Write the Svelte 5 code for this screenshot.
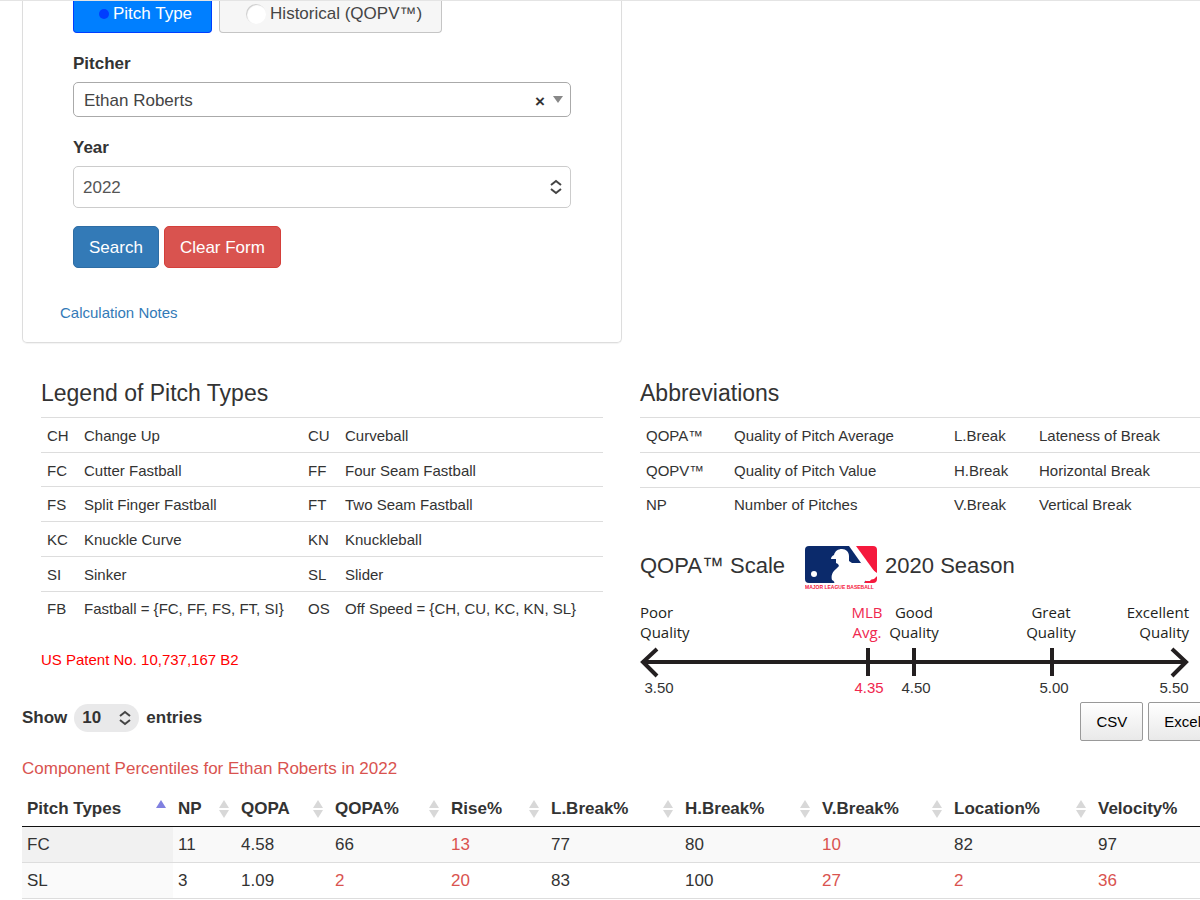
<script>
	let mode = $state("type");
	let pitcher = $state("Ethan Roberts");
	let year = $state("2022");
	let entries = $state("10");

	const legend = [
		["CH", "Change Up", "CU", "Curveball"],
		["FC", "Cutter Fastball", "FF", "Four Seam Fastball"],
		["FS", "Split Finger Fastball", "FT", "Two Seam Fastball"],
		["KC", "Knuckle Curve", "KN", "Knuckleball"],
		["SI", "Sinker", "SL", "Slider"],
		["FB", "Fastball = {FC, FF, FS, FT, SI}", "OS", "Off Speed = {CH, CU, KC, KN, SL}"],
	];

	const abbreviations = [
		["QOPA™", "Quality of Pitch Average", "L.Break", "Lateness of Break"],
		["QOPV™", "Quality of Pitch Value", "H.Break", "Horizontal Break"],
		["NP", "Number of Pitches", "V.Break", "Vertical Break"],
	];

	const columns = [
		{ name: "Pitch Types", width: 151 },
		{ name: "NP", width: 63 },
		{ name: "QOPA", width: 94 },
		{ name: "QOPA%", width: 116 },
		{ name: "Rise%", width: 100 },
		{ name: "L.Break%", width: 134 },
		{ name: "H.Break%", width: 137 },
		{ name: "V.Break%", width: 132 },
		{ name: "Location%", width: 144 },
		{ name: "Velocity%", width: 129 },
	];
	const total = columns.reduce((sum, c) => sum + c.width, 0);

	const rows = [
		["FC", 11, "4.58", 66, 13, 77, 80, 10, 82, 97],
		["SL", 3, "1.09", 2, 20, 83, 100, 27, 2, 36],
	];

	// percentiles start at the fourth column
	const isLow = (value, i) => i > 2 && value < 50;

	function clearForm() {
		mode = "type";
		pitcher = "";
		year = "2022";
	}
</script>

{#snippet chevrons()}
	<svg class="chevrons" viewBox="0 0 14 16" aria-hidden="true">
		<path d="M2 6 7 2l5 4M2 10l5 4 5-4" />
	</svg>
{/snippet}

<main>
	<div class="content">
		<form class="panel" onsubmit={(e) => e.preventDefault()}>
			<div class="modes">
				<label class:active={mode === "type"}>
					<input type="radio" name="mode" value="type" bind:group={mode} />
					Pitch Type
				</label>
				<label class:active={mode === "historical"}>
					<input type="radio" name="mode" value="historical" bind:group={mode} />
					Historical (QOPV™)
				</label>
			</div>

			<label class="title" for="pitcher">Pitcher</label>
			<div class="field pitcher">
				<select id="pitcher" bind:value={pitcher}>
					<option value=""></option>
					<option>Ethan Roberts</option>
				</select>
				<button type="button" class="remove" aria-label="Remove pitcher" onclick={() => (pitcher = "")}>×</button>
				<span class="arrow"></span>
			</div>

			<label class="title" for="year">Year</label>
			<div class="field year">
				<select id="year" bind:value={year}>
					<option>2022</option>
					<option>2021</option>
					<option>2020</option>
				</select>
				{@render chevrons()}
			</div>

			<div class="actions">
				<button class="btn primary">Search</button>
				<button class="btn danger" type="button" onclick={clearForm}>Clear Form</button>
			</div>

			<a class="notes" href="#notes">Calculation Notes</a>
		</form>

		<div class="columns">
			<section>
				<h3>Legend of Pitch Types</h3>
				<table class="info legend">
					<colgroup><col class="code" /><col class="name" /><col class="code" /><col /></colgroup>
					<tbody>
						{#each legend as row}
							<tr>{#each row as cell}<td>{cell}</td>{/each}</tr>
						{/each}
					</tbody>
				</table>
				<p class="patent">US Patent No. 10,737,167 B2</p>
			</section>

			<section>
				<h3>Abbreviations</h3>
				<table class="info abbr">
					<colgroup><col class="key" /><col class="name" /><col class="break" /><col /></colgroup>
					<tbody>
						{#each abbreviations as row}
							<tr>{#each row as cell}<td>{cell}</td>{/each}</tr>
						{/each}
					</tbody>
				</table>

				<h3 class="scale-title">
					QOPA™ Scale
					<svg class="logo" viewBox="0 0 74 46" role="img" aria-label="Major League Baseball">
						<path fill="#0b2a6b" d="M4 0h40l17 24v13H4a4 4 0 0 1-4-4V4a4 4 0 0 1 4-4z" />
						<path fill="#f5193d" d="M51 0h17a4 4 0 0 1 4 4v25z" />
						<path fill="#f5193d" d="M72 30v3a4 4 0 0 1-4 4h-8v-2h5l2-3z" />
						<path
							fill="#fff"
							d="M26 13c0-2 1-3 3-4 1-4 4-6 8-6s7 3 7 7v5l3 2h9l3 1 13 9v3l-3 3-5 1-4 1-1 3H29c1-2 0-3-2-4-1-4 0-8 4-11l3-3-1-2-2-1v-4z"
						/>
						<circle cx="9" cy="28" r="3" fill="#fff" />
						<text x="0" y="43">MAJOR LEAGUE BASEBALL</text>
					</svg>
					2020 Season
				</h3>

				<svg class="scale" viewBox="0 0 550 98" role="img" aria-label="QOPA scale">
					<g class="axis">
						<path d="M3 60H546M17 47 3 60l14 14M532 47l14 13-14 14" />
						<path d="M228 46v28M274 46v28M412 46v28" />
					</g>
					<g class="quality">
						<text x="0" y="16">Poor</text>
						<text x="0" y="36">Quality</text>
						<g class="red" text-anchor="middle">
							<text x="227" y="16">MLB</text>
							<text x="227" y="36">Avg.</text>
						</g>
						<g text-anchor="middle">
							<text x="274" y="16">Good</text>
							<text x="274" y="36">Quality</text>
							<text x="411" y="16">Great</text>
							<text x="411" y="36">Quality</text>
						</g>
						<g text-anchor="end">
							<text x="549" y="16">Excellent</text>
							<text x="549" y="36">Quality</text>
						</g>
					</g>
					<g class="numbers" text-anchor="middle">
						<text x="19" y="91">3.50</text>
						<text class="red" x="229" y="91">4.35</text>
						<text x="276" y="91">4.50</text>
						<text x="414" y="91">5.00</text>
						<text x="534" y="91">5.50</text>
					</g>
				</svg>
			</section>
		</div>

		<div class="toolbar">
			<label class="length">
				Show
				<span class="pill">
					<select bind:value={entries}>
						<option>10</option>
						<option>25</option>
						<option>50</option>
					</select>
					{@render chevrons()}
				</span>
				entries
			</label>
			<div class="exports">
				<button>CSV</button>
				<button>Excel</button>
			</div>
		</div>

		<table class="data">
			<caption>Component Percentiles for Ethan Roberts in 2022</caption>
			<thead>
				<tr>
					{#each columns as col, i}
						<th style:width="{(col.width / total) * 100}%" aria-sort={i === 0 ? "ascending" : null}>
							<div>
								{col.name}
								<svg class="sort" class:asc={i === 0} viewBox="0 0 10 18" aria-hidden="true">
									<path d="M5 0 10 8H0z" />
									<path class="down" d="M0 10h10L5 18z" />
								</svg>
							</div>
						</th>
					{/each}
				</tr>
			</thead>
			<tbody>
				{#each rows as row}
					<tr>
						{#each row as value, i}
							<td class:low={isLow(value, i)}>{value}</td>
						{/each}
					</tr>
				{/each}
			</tbody>
		</table>
	</div>
</main>

<style>
	:global(body) {
		margin: 0;
		background: #fff;
	}

	main {
		overflow: hidden;
		padding-left: 22px;
		border-top: 1px solid #e4e4e4;
		color: #333;
		font: 17px/24px "Liberation Sans", Arial, sans-serif;
	}

	main * {
		box-sizing: border-box;
	}

	/* as wide as the window, so it runs past the right edge */
	.content {
		width: 100vw;
	}

	button,
	select,
	input {
		font: inherit;
		color: inherit;
		margin: 0;
	}

	.panel {
		width: 50%;
		padding: 0 50px 17px;
		border: 1px solid #ddd;
		border-top: 0;
		border-radius: 0 0 5px 5px;
		box-shadow: 0 1px 1px rgba(0, 0, 0, 0.05);
	}

	.modes {
		display: flex;
		gap: 7px;
	}

	.modes label {
		display: flex;
		align-items: center;
		gap: 4px;
		padding: 1px 19px 6px 26px;
		border: 1px solid #c5c5c5;
		border-top: 0;
		border-radius: 0 0 4px 4px;
		background: #f6f6f6;
		color: #454545;
	}

	.modes label.active {
		padding-left: 25px;
		border-color: #003eff;
		background: #007fff;
		color: #fff;
	}

	.modes input {
		appearance: none;
		width: 20px;
		height: 20px;
		border-radius: 50%;
		background: #fff;
		box-shadow: inset 1px 1px 1px #ccc;
	}

	.modes .active input {
		width: 10px;
		height: 10px;
		background: #003eff;
		box-shadow: none;
	}

	.title {
		display: block;
		margin: 19px 0 6px;
		font-weight: bold;
	}

	.field {
		position: relative;
	}

	.field select {
		display: block;
		appearance: none;
		width: 100%;
		height: 42px;
		padding: 1px 9px 0;
		border: 1px solid #ccc;
		border-radius: 5px;
		background: #fff;
		color: #555;
	}

	.field.pitcher select {
		height: 35px;
		padding: 2px 10px 0;
		border-color: #aaa;
		color: #444;
	}

	.remove {
		position: absolute;
		top: 8px;
		right: 26px;
		padding: 0;
		border: 0;
		background: none;
		font-weight: bold;
	}

	.arrow {
		position: absolute;
		top: 14px;
		right: 8px;
		border: solid transparent;
		border-width: 7px 5px 0;
		border-top-color: #888;
	}

	.chevrons {
		position: absolute;
		top: 50%;
		right: 8px;
		width: 14px;
		height: 16px;
		margin-top: -8px;
		fill: none;
		stroke: #444;
		stroke-width: 2;
		pointer-events: none;
	}

	.actions {
		display: flex;
		gap: 5px;
		margin-top: 18px;
	}

	.btn {
		height: 42px;
		padding: 1px 15px 0;
		border: 1px solid #2e6da4;
		border-radius: 5px;
		background: #337ab7;
		color: #fff;
	}

	.danger {
		border-color: #d43f3a;
		background: #d9534f;
	}

	.notes {
		display: inline-block;
		margin: 33px 0 0 -13px;
		color: #337ab7;
		font-size: 15px;
		text-decoration: none;
	}

	.columns {
		display: grid;
		grid-template-columns: 1fr 1fr;
		margin-top: 37px;
	}

	.columns section {
		padding: 0 18px;
	}

	.columns section:first-child {
		padding: 0 19px;
	}

	h3 {
		margin: 0 0 11px;
		font-size: 23px;
		font-weight: 500;
		line-height: 26px;
	}

	.info {
		width: 100%;
		border-collapse: collapse;
		table-layout: fixed;
		font-size: 15px;
		line-height: 20px;
	}

	.legend {
		height: 208px;
	}

	.abbr {
		height: 104px;
	}

	.info td {
		padding: 2px 6px 0;
		border-top: 1px solid #ddd;
		white-space: nowrap;
	}

	.code {
		width: 37px;
	}

	.legend .name {
		width: 224px;
	}

	.abbr .name {
		width: 220px;
	}

	.key {
		width: 88px;
	}

	.break {
		width: 85px;
	}

	.patent {
		margin: 23px 0 0;
		color: #f00;
		font-size: 15px;
	}

	.scale-title {
		display: flex;
		gap: 6px;
		height: 46px;
		margin: 25px 0 10px;
		font-size: 22px;
		line-height: 40px;
	}

	.logo {
		width: 74px;
		height: 46px;
		margin-left: 14px;
	}

	.logo text {
		fill: #f5193d;
		font: bold 5px "Liberation Sans", sans-serif;
	}

	.scale {
		display: block;
		width: 550px;
		max-width: 100%;
	}

	.axis {
		fill: none;
		stroke: #231f20;
		stroke-width: 4;
	}

	.quality {
		fill: #231f20;
		font: 15px "Open Sans", sans-serif;
	}

	.numbers {
		fill: #333;
		font-size: 15px;
	}

	.scale .red {
		fill: #f0284f;
	}

	.toolbar {
		display: flex;
		justify-content: space-between;
		margin-top: 2px;
		padding-right: 5px;
	}

	.length {
		display: flex;
		align-items: center;
		gap: 7px;
		height: 31px;
		font-weight: bold;
	}

	.pill {
		position: relative;
	}

	.pill select {
		display: block;
		appearance: none;
		width: 65px;
		height: 28px;
		padding: 0 8px;
		border: 0;
		border-radius: 14px;
		background: #e9e9ea;
	}

	.pill .chevrons {
		right: 7px;
	}

	.exports {
		display: flex;
		gap: 5px;
	}

	.exports button {
		height: 39px;
		padding: 0 15px;
		border: 1px solid #999;
		border-radius: 2px;
		background: linear-gradient(#fff, #e9e9e9);
		color: #000;
		font-size: 15px;
	}

	.data {
		width: 100%;
		margin-top: 16px;
		border-collapse: separate;
		border-spacing: 0;
		table-layout: fixed;
	}

	.data caption {
		padding-bottom: 10px;
		color: #d9534f;
		text-align: left;
	}

	.data th {
		height: 36px;
		padding: 0 7px 0 5px;
		border-bottom: 1px solid #111;
		text-align: left;
	}

	.data th div {
		display: flex;
		align-items: center;
		justify-content: space-between;
	}

	.sort {
		flex: none;
		width: 10px;
		height: 18px;
		fill: #d8d8d8;
	}

	.sort.asc {
		fill: #8080e0;
	}

	.asc .down {
		display: none;
	}

	.data td {
		height: 36px;
		padding: 0 5px;
		border-bottom: 1px solid #ddd;
	}

	.data tbody tr:nth-child(odd) {
		background: #f9f9f9;
	}

	.data tbody td:first-child {
		background: #fafafa;
	}

	.data tbody tr:nth-child(odd) td:first-child {
		background: #f1f1f1;
	}

	.data .low {
		color: #d9534f;
	}
</style>
